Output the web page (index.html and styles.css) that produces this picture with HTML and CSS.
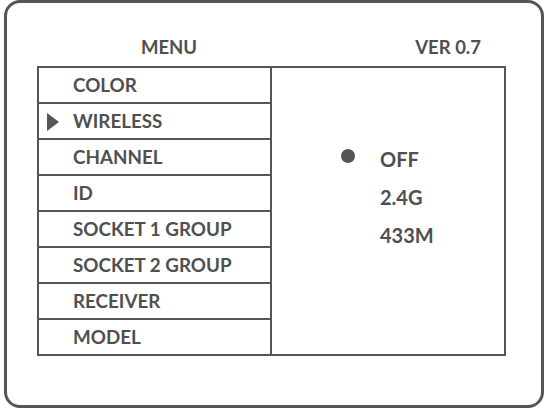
FILE: index.html
```html
<!DOCTYPE html>
<html>
<head>
<meta charset="utf-8">
<link rel="stylesheet" href="styles.css">
</head>
<body>
<div class="frame">
  <div class="header">
    <span class="title">MENU</span>
    <span class="version">VER 0.7</span>
  </div>
  <div class="table">
    <ul class="menu">
      <li class="item">COLOR</li>
      <li class="item active">WIRELESS</li>
      <li class="item">CHANNEL</li>
      <li class="item">ID</li>
      <li class="item">SOCKET 1 GROUP</li>
      <li class="item">SOCKET 2 GROUP</li>
      <li class="item">RECEIVER</li>
      <li class="item">MODEL</li>
    </ul>
    <ul class="options">
      <li class="option selected"><span class="dot"></span>OFF</li>
      <li class="option"><span class="dot"></span>2.4G</li>
      <li class="option"><span class="dot"></span>433M</li>
    </ul>
  </div>
</div>
</body>
</html>
```
FILE: styles.css
```css
* { box-sizing: border-box; }
html, body { margin: 0; padding: 0; background: #fff; }
body {
  font-family: "Lato", "Liberation Sans", sans-serif;
  font-weight: 700;
  color: #4f4f4f;
}
.frame {
  width: 540px;
  height: 408px;
  margin-left: 4px;
  border: 3px solid #555;
  border-radius: 16px;
  padding: 34px 0 0 30px;
}
.header {
  width: 468px;
  height: 20px;
  line-height: 20px;
  font-size: 18.5px;
  display: flex;
  justify-content: space-between;
  padding: 0 24px 0 104px;
}
.table {
  margin-top: 9px;
  width: 469px;
  border: 2px solid #555;
  display: flex;
}
.menu {
  list-style: none;
  margin: 0;
  padding: 0;
  width: 233px;
  border-right: 2px solid #555;
}
.item {
  height: 36px;
  border-bottom: 2px solid #555;
  line-height: 34px;
  font-size: 18.8px;
  padding-left: 34px;
  position: relative;
}
.item:last-child { border-bottom: 0; height: 34px; }
.item.active::before {
  content: "";
  position: absolute;
  left: 8px;
  top: 9px;
  border-left: 12px solid #555;
  border-top: 9.5px solid transparent;
  border-bottom: 9.5px solid transparent;
}
.options {
  list-style: none;
  margin: 0;
  padding: 72px 0 0 69px;
  flex: 1;
}
.option {
  display: flex;
  align-items: center;
  height: 38px;
  font-size: 20px;
}
.dot {
  width: 14px;
  height: 14px;
  border-radius: 50%;
  margin-right: 25px;
  margin-top: -6px;
}
.selected .dot { background: #555; }
```
